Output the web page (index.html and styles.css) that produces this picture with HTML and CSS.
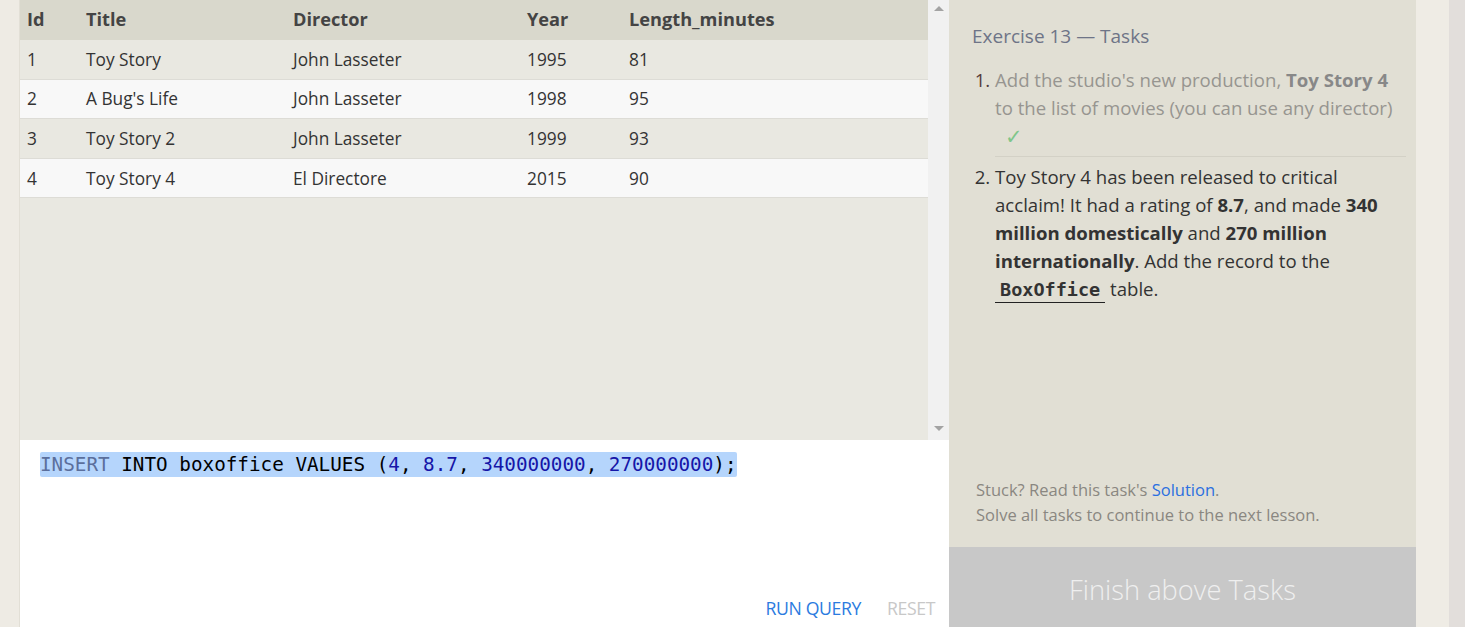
FILE: index.html
```html
<!DOCTYPE html>
<html>
<head>
<meta charset="utf-8">
<link rel="stylesheet" href="styles.css">
</head>
<body>
<div class="page">
  <div class="gutter-left"></div>
  <main class="workspace">
    <section class="results">
      <div class="table-wrap">
        <table class="grid">
          <colgroup>
            <col class="c-id"><col class="c-title"><col class="c-dir"><col class="c-year"><col class="c-len">
          </colgroup>
          <thead>
            <tr><th>Id</th><th>Title</th><th>Director</th><th>Year</th><th>Length_minutes</th></tr>
          </thead>
          <tbody>
            <tr><td>1</td><td>Toy Story</td><td>John Lasseter</td><td>1995</td><td>81</td></tr>
            <tr><td>2</td><td>A Bug's Life</td><td>John Lasseter</td><td>1998</td><td>95</td></tr>
            <tr><td>3</td><td>Toy Story 2</td><td>John Lasseter</td><td>1999</td><td>93</td></tr>
            <tr><td>4</td><td>Toy Story 4</td><td>El Directore</td><td>2015</td><td>90</td></tr>
          </tbody>
        </table>
      </div>
      <div class="vscroll">
        <span class="arrow-up"></span>
        <span class="arrow-down"></span>
      </div>
    </section>
    <section class="editor">
      <div class="code"><span class="sel"><span class="kw">INSERT</span> INTO boxoffice VALUES (<span class="num">4</span>, <span class="num">8.7</span>, <span class="num">340000000</span>, <span class="num">270000000</span>);</span></div>
      <div class="actions">
        <span class="btn-run">RUN QUERY</span>
        <span class="btn-reset">RESET</span>
      </div>
    </section>
  </main>
  <aside class="tasks">
    <div class="tasks-body">
      <h2 class="tasks-title">Exercise 13 — Tasks</h2>
      <ol class="task-list">
        <li class="task done">Add the studio's new production, <strong>Toy Story 4</strong> to the list of movies (you can use any director)<br><span class="check">✓</span></li>
        <li class="task">Toy Story 4 has been released to critical acclaim! It had a rating of <strong>8.7</strong>, and made <strong>340 million domestically</strong> and <strong>270 million internationally</strong>. Add the record to the <code class="tbl">BoxOffice</code> table.</li>
      </ol>
      <div class="help">
        <p>Stuck? Read this task's <a class="link">Solution</a>.</p>
        <p>Solve all tasks to continue to the next lesson.</p>
      </div>
    </div>
    <div class="finish">Finish above Tasks</div>
  </aside>
  <div class="gutter-right"></div>
  <div class="page-scroll"></div>
</div>
</body>
</html>
```
FILE: styles.css
```css
html, body {
  margin: 0;
  padding: 0;
  height: 627px;
  overflow: hidden;
}
body {
  font-family: "Open Sans", "Noto Sans", sans-serif;
  background: #eeebe4;
}
.page {
  display: flex;
  height: 627px;
}
.gutter-left {
  width: 19px;
  flex: none;
  background: #eeebe4;
  border-right: 1px solid #e2dfd6;
}
.workspace {
  width: 929px;
  flex: none;
  display: flex;
  flex-direction: column;
}
.results {
  height: 440px;
  flex: none;
  display: flex;
  background: #e9e8e1;
}
.table-wrap {
  flex: 1;
}
.grid {
  width: 100%;
  border-collapse: collapse;
  table-layout: fixed;
  font-size: 17.3px;
  color: #333;
}
.c-id { width: 59px; }
.c-title { width: 207px; }
.c-dir { width: 234px; }
.c-year { width: 102px; }
.grid th {
  background: #d9d8cc;
  color: #444;
  font-weight: 700;
  font-size: 18.2px;
  text-align: left;
  height: 39.5px;
  padding: 0 7px 1px;
  box-sizing: border-box;
}
.grid td {
  height: 39.6px;
  box-sizing: border-box;
  padding: 0 7px;
  border-bottom: 1px solid #dddcd6;
}
.grid tbody tr:nth-child(odd) td { background: #e9e8e1; }
.grid tbody tr:nth-child(even) td { background: #f8f8f8; }
.vscroll {
  width: 21px;
  flex: none;
  background: #f1f1f1;
  display: flex;
  flex-direction: column;
  justify-content: space-between;
  align-items: center;
  padding: 6px 0 9px;
  box-sizing: border-box;
}
.arrow-up {
  width: 0; height: 0;
  border-left: 5px solid transparent;
  border-right: 5px solid transparent;
  border-bottom: 5px solid #a3a3a3;
}
.arrow-down {
  width: 0; height: 0;
  border-left: 5px solid transparent;
  border-right: 5px solid transparent;
  border-top: 5px solid #a3a3a3;
}
.editor {
  flex: 1;
  background: #fff;
  display: flex;
  flex-direction: column;
  justify-content: space-between;
  padding: 12px 14px 7px 20px;
  box-sizing: border-box;
}
.code {
  font-family: "DejaVu Sans Mono", "Liberation Mono", monospace;
  font-size: 19.3px;
  line-height: 25px;
  color: #000;
  white-space: pre;
}
.sel {
  background: #b5d5fc;
  border-radius: 2px;
  padding: 1px 0;
}
.kw { color: #5b6f9c; }
.num { color: #1616a8; }
.actions {
  display: flex;
  justify-content: flex-end;
  gap: 26px;
  font-size: 17.7px;
  letter-spacing: -0.4px;
}
.btn-run { color: #2b7be0; }
.btn-reset { color: #c8c8c8; }
.tasks {
  width: 467px;
  flex: none;
  background: #e1dfd4;
  display: flex;
  flex-direction: column;
}
.tasks-body {
  flex: 1;
  padding: 22px 10px 0 23px;
  display: flex;
  flex-direction: column;
}
.tasks-title {
  margin: 0 0 16px;
  font-size: 19px;
  font-weight: 400;
  color: #6e7487;
  line-height: 28px;
}
.task-list {
  margin: 0;
  padding-left: 23px;
  font-size: 18.6px;
  line-height: 28px;
  color: #333;
}
.task {
  padding-bottom: 6px;
}
.task.done {
  color: #979590;
  border-bottom: 1px solid #d3d1c6;
  margin-bottom: 6px;
  padding-bottom: 5px;
}
.task.done::marker { color: #553b3b; }
.task.done strong { color: #888; }
.check {
  color: #7fc68a;
  margin-left: 10px;
  font-size: 21px;
}
.tbl {
  font-family: "DejaVu Sans Mono", "Liberation Mono", monospace;
  font-weight: 700;
  font-size: 18.5px;
  padding: 0 5px 2px;
  border-bottom: 1.5px solid #222;
}
.help {
  margin-top: auto;
  padding: 0 0 20px 4px;
  font-size: 16.5px;
  color: #8a8781;
  line-height: 25px;
}
.help p { margin: 0; }
.link { color: #2b6fe0; }
.finish {
  height: 80px;
  flex: none;
  background: #c8c8c8;
  color: #efefef;
  font-size: 27.3px;
  font-weight: 300;
  display: flex;
  align-items: center;
  justify-content: center;
  padding-top: 5px;
  box-sizing: border-box;
}
.gutter-right {
  width: 33px;
  flex: none;
  background: #efece5;
}
.page-scroll {
  flex: 1;
  background: #e2dedb;
}
```
